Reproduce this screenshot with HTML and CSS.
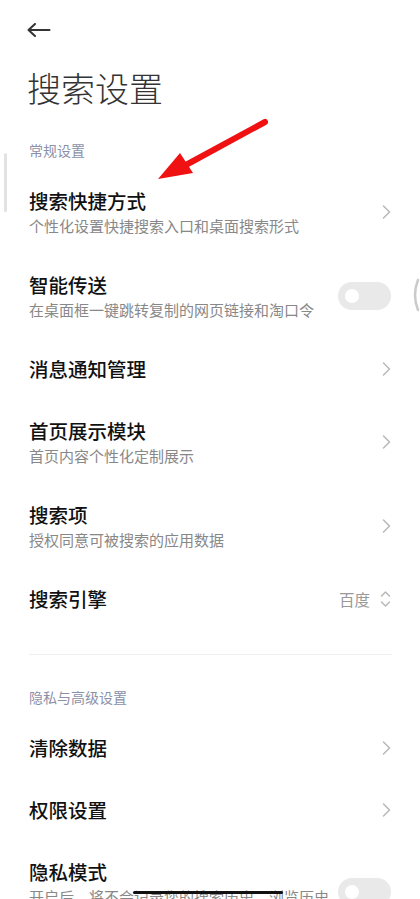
FILE: index.html
```html
<!DOCTYPE html>
<html lang="zh-CN">
<head>
    <meta charset="UTF-8">
    <meta name="viewport" content="width=device-width, initial-scale=1.0">
    <title>搜索设置</title>
    <link rel="stylesheet" href="styles.css">
</head>
<body>
    <div class="tela">
        <header class="barra-topo">
            <button class="voltar" aria-label="返回">
                <svg width="24" height="14" viewBox="0 0 24 14"><path d="M22.5 7H1.5M8 1L1.5 7L8 13" fill="none" stroke="#333" stroke-width="2" stroke-linecap="round" stroke-linejoin="round"/></svg>
            </button>
        </header>

        <h1 class="titulo">搜索设置</h1>

        <section class="grupo">
            <h2 class="grupo-titulo">常规设置</h2>
            <ul class="lista">
                <li class="item">
                    <div class="item-texto">
                        <p class="item-nome">搜索快捷方式</p>
                        <p class="item-desc">个性化设置快捷搜索入口和桌面搜索形式</p>
                    </div>
                    <svg class="seta" width="9" height="14" viewBox="0 0 9 14"><path d="M1.5 1L7.5 7L1.5 13" fill="none" stroke="#b8b8b8" stroke-width="1.5" stroke-linecap="round" stroke-linejoin="round"/></svg>
                </li>
                <li class="item">
                    <div class="item-texto">
                        <p class="item-nome">智能传送</p>
                        <p class="item-desc">在桌面框一键跳转复制的网页链接和淘口令</p>
                    </div>
                    <span class="chave"><span class="chave-bola"></span></span>
                </li>
                <li class="item">
                    <div class="item-texto">
                        <p class="item-nome">消息通知管理</p>
                    </div>
                    <svg class="seta" width="9" height="14" viewBox="0 0 9 14"><path d="M1.5 1L7.5 7L1.5 13" fill="none" stroke="#b8b8b8" stroke-width="1.5" stroke-linecap="round" stroke-linejoin="round"/></svg>
                </li>
                <li class="item">
                    <div class="item-texto">
                        <p class="item-nome">首页展示模块</p>
                        <p class="item-desc">首页内容个性化定制展示</p>
                    </div>
                    <svg class="seta" width="9" height="14" viewBox="0 0 9 14"><path d="M1.5 1L7.5 7L1.5 13" fill="none" stroke="#b8b8b8" stroke-width="1.5" stroke-linecap="round" stroke-linejoin="round"/></svg>
                </li>
                <li class="item">
                    <div class="item-texto">
                        <p class="item-nome">搜索项</p>
                        <p class="item-desc">授权同意可被搜索的应用数据</p>
                    </div>
                    <svg class="seta" width="9" height="14" viewBox="0 0 9 14"><path d="M1.5 1L7.5 7L1.5 13" fill="none" stroke="#b8b8b8" stroke-width="1.5" stroke-linecap="round" stroke-linejoin="round"/></svg>
                </li>
                <li class="item">
                    <div class="item-texto">
                        <p class="item-nome">搜索引擎</p>
                    </div>
                    <span class="valor">百度</span>
                    <svg class="seletor" width="11" height="18" viewBox="0 0 11 18"><path d="M1.5 6L5.5 2L9.5 6M1.5 12L5.5 16L9.5 12" fill="none" stroke="#b8b8b8" stroke-width="1.5" stroke-linecap="round" stroke-linejoin="round"/></svg>
                </li>
            </ul>
        </section>

        <hr class="divisor">

        <section class="grupo grupo-segundo">
            <h2 class="grupo-titulo">隐私与高级设置</h2>
            <ul class="lista">
                <li class="item">
                    <div class="item-texto">
                        <p class="item-nome">清除数据</p>
                    </div>
                    <svg class="seta" width="9" height="14" viewBox="0 0 9 14"><path d="M1.5 1L7.5 7L1.5 13" fill="none" stroke="#b8b8b8" stroke-width="1.5" stroke-linecap="round" stroke-linejoin="round"/></svg>
                </li>
                <li class="item">
                    <div class="item-texto">
                        <p class="item-nome">权限设置</p>
                    </div>
                    <svg class="seta" width="9" height="14" viewBox="0 0 9 14"><path d="M1.5 1L7.5 7L1.5 13" fill="none" stroke="#b8b8b8" stroke-width="1.5" stroke-linecap="round" stroke-linejoin="round"/></svg>
                </li>
                <li class="item">
                    <div class="item-texto">
                        <p class="item-nome">隐私模式</p>
                        <p class="item-desc">开启后，将不会记录您的搜索历史、浏览历史和输入记录</p>
                    </div>
                    <span class="chave"><span class="chave-bola"></span></span>
                </li>
            </ul>
        </section>

        <!-- sobreposições -->
        <div class="rolagem"></div>
        <svg class="borda-vizinha" width="10" height="34" viewBox="0 0 10 34"><path d="M8 2Q2 17 8 32" fill="none" stroke="#cacaca" stroke-width="2.5" stroke-linecap="round"/></svg>
        <svg class="seta-vermelha" width="125" height="75" viewBox="0 0 125 75">
            <line x1="115" y1="7" x2="34" y2="51" stroke="#f01212" stroke-width="6" stroke-linecap="round"/>
            <polygon points="8,64 30,38 43,58" fill="#f01212"/>
        </svg>
        <div class="barra-gesto"></div>
    </div>
</body>
</html>
```

FILE: styles.css
```css
* {
    margin: 0;
    padding: 0;
    box-sizing: border-box;
}
body {
    font-family: "Noto Sans CJK SC", "Noto Sans", sans-serif;
    background-color: #fff;
    color: #000;
    overflow: hidden;
}
.tela {
    position: relative;
    width: 420px;
    height: 899px;
    overflow: hidden;
}
.barra-topo {
    height: 60px;
    padding-left: 27px;
    display: flex;
    align-items: center;
}
.voltar {
    border: none;
    background: none;
    display: flex;
}
.titulo {
    margin-top: 3px;
    padding-left: 27px;
    font-size: 34px;
    line-height: 50px;
    font-weight: 300;
    color: #333;
}
.grupo {
    padding-top: 27px;
}
.grupo-segundo {
    padding-top: 32px;
}
.grupo-titulo {
    padding-left: 29px;
    font-size: 14px;
    line-height: 20px;
    font-weight: 400;
    color: #8c90a8;
    margin-bottom: 10px;
}
.lista {
    list-style: none;
}
.item {
    display: flex;
    align-items: center;
    padding: 19px 29px;
}
.item-texto {
    flex: 1;
    min-width: 0;
}
.item-nome {
    font-size: 19.5px;
    line-height: 24px;
    font-weight: 500;
    color: #111;
}
.item-desc {
    margin-top: 4px;
    font-size: 15px;
    line-height: 18px;
    color: #888;
}
.seta {
    flex-shrink: 0;
}
.valor {
    font-size: 15.5px;
    color: #999;
    margin-right: 10px;
}
.seletor {
    flex-shrink: 0;
}
.chave {
    flex-shrink: 0;
    width: 53px;
    height: 28px;
    margin-left: 4px;
    border-radius: 14px;
    background-color: #e9e9e9;
    display: flex;
    align-items: center;
    padding-left: 7px;
}
.chave-bola {
    width: 14px;
    height: 14px;
    border-radius: 50%;
    background-color: #fff;
}
.divisor {
    border: none;
    height: 1px;
    background-color: #f0f0f0;
    margin: 24px 28px 0 29px;
}
.rolagem {
    position: absolute;
    left: 4px;
    top: 153px;
    width: 3px;
    height: 59px;
    border-radius: 2px;
    background-color: #e2e2e2;
}
.borda-vizinha {
    position: absolute;
    left: 410px;
    top: 278px;
}
.seta-vermelha {
    position: absolute;
    left: 150px;
    top: 115px;
}
.barra-gesto {
    position: absolute;
    left: 133px;
    top: 891px;
    width: 150px;
    height: 3px;
    border-radius: 2px;
    background-color: #111;
}
```
